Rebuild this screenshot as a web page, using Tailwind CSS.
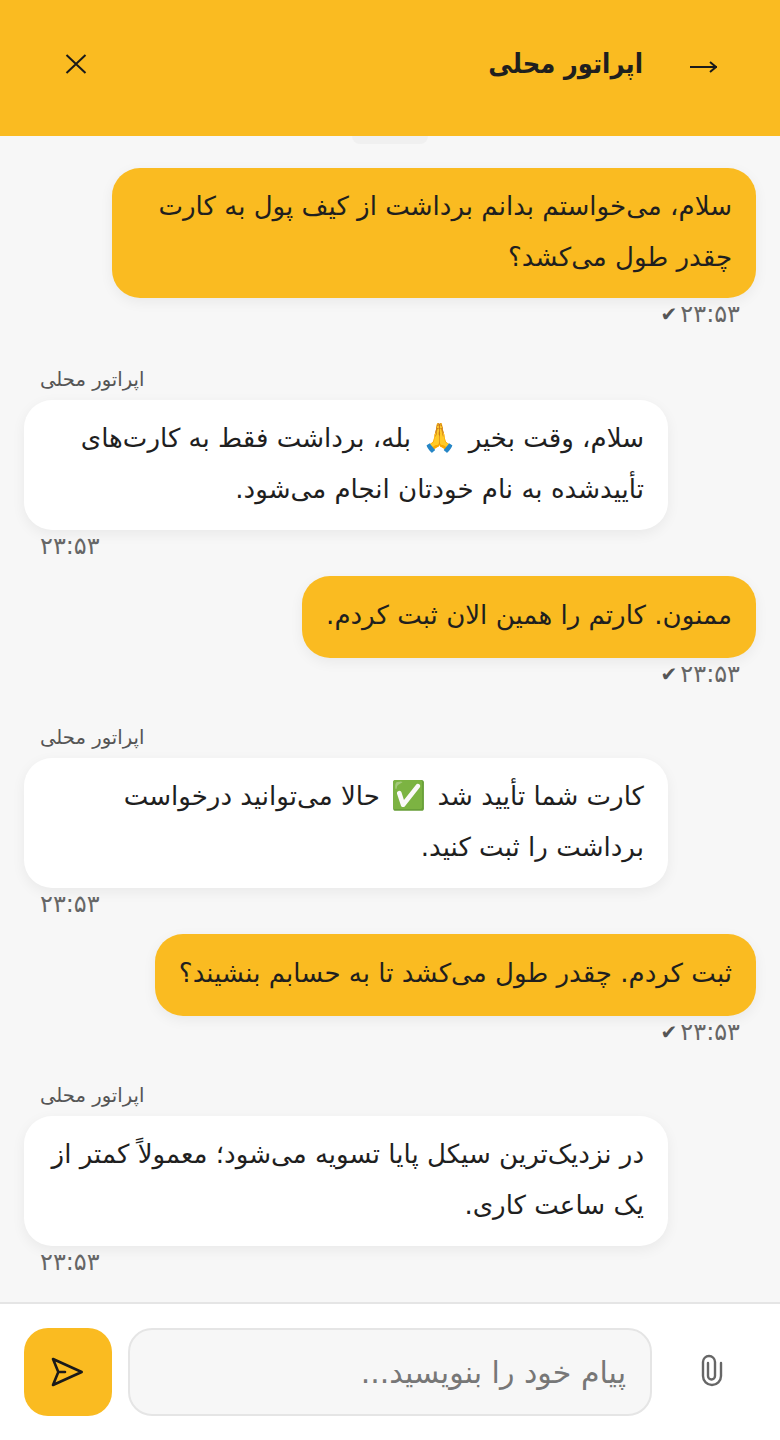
<!DOCTYPE html>
<html lang="fa" dir="rtl">
<head>
  <meta charset="UTF-8">
  <meta name="viewport" content="width=device-width, initial-scale=1.0">
  <title>اپراتور محلی</title>
  <script src="https://cdn.jsdelivr.net/npm/@tailwindcss/browser@4"></script>
</head>
<body class="bg-[#f7f7f7] font-['DejaVu_Sans',sans-serif] text-[#1f1f1f]">
  <div class="relative flex h-[1440px] w-[780px] flex-col overflow-hidden">

    <!-- Header -->
    <header class="relative z-10 flex h-[136px] shrink-0 items-center bg-[#fabb21] pr-[63px] pl-[64px] pb-2">
      <svg class="mt-[5px] h-3 w-[27px]" viewBox="0 0 27 12" fill="none" stroke="#1a1a1a" stroke-width="2"><path d="M27 6H0M20 1l6 5-6 5"/></svg>
      <h1 class="mr-[47px] font-['DejaVu_Sans_Condensed','DejaVu_Sans',sans-serif] text-[27px] font-bold">اپراتور محلی</h1>
      <button class="mr-auto">
        <svg class="h-6 w-6" viewBox="0 0 24 24" fill="none" stroke="#1a1a1a" stroke-width="2"><path d="M2.5 3l19 18M21.5 3l-19 18"/></svg>
      </button>
    </header>
    <!-- Scroll nub under the header -->
    <div class="absolute top-[136px] left-[352px] h-2 w-[76px] rounded-b-xl bg-[#f0f0f0]"></div>

    <!-- Messages -->
    <main class="flex flex-1 flex-col px-6 pt-8 text-[26.05px] leading-[51px]">
      <div class="self-start">
        <p class="w-[644px] rounded-[28px] bg-[#fabb21] px-6 pt-[13px] pb-[15px] shadow-[0_4px_14px_rgba(0,0,0,0.06)]">سلام، می‌خواستم بدانم برداشت از کیف پول به کارت چقدر طول می‌کشد؟</p>
        <div class="mt-1 flex gap-[3px] px-4 text-[24px] leading-6 text-[#666]"><span>۲۳:۵۳</span><span class="text-[20px] text-[#555]">✔</span></div>
      </div>

      <div class="mt-[42px] self-end">
        <p class="mb-2 px-4 text-left text-[19.6px] leading-6 text-[#555]">اپراتور محلی</p>
        <p class="w-[644px] rounded-[28px] bg-white px-6 pt-[13px] pb-[15px] shadow-[0_4px_14px_rgba(0,0,0,0.06)]">سلام، وقت بخیر <span class="mx-[3px] text-[28px] leading-none">🙏</span> بله، برداشت فقط به کارت‌های تأییدشده به نام خودتان انجام می‌شود.</p>
        <p class="mt-1 px-4 text-left text-[24px] leading-6 text-[#666]">۲۳:۵۳</p>
      </div>

      <div class="mt-[18px] self-start">
        <p class="rounded-[28px] bg-[#fabb21] px-6 pt-[14px] pb-[17px] shadow-[0_4px_14px_rgba(0,0,0,0.06)]">ممنون. کارتم را همین الان ثبت کردم.</p>
        <div class="mt-1 flex gap-[3px] px-4 text-[24px] leading-6 text-[#666]"><span>۲۳:۵۳</span><span class="text-[20px] text-[#555]">✔</span></div>
      </div>

      <div class="mt-[40px] self-end">
        <p class="mb-2 px-4 text-left text-[19.6px] leading-6 text-[#555]">اپراتور محلی</p>
        <p class="w-[644px] rounded-[28px] bg-white px-6 pt-[13px] pb-[15px] shadow-[0_4px_14px_rgba(0,0,0,0.06)]">کارت شما تأیید شد <span class="mx-[3px] text-[28px] leading-none">✅</span> حالا می‌توانید درخواست<br>برداشت را ثبت کنید.</p>
        <p class="mt-1 px-4 text-left text-[24px] leading-6 text-[#666]">۲۳:۵۳</p>
      </div>

      <div class="mt-[18px] self-start">
        <p class="rounded-[28px] bg-[#fabb21] px-6 pt-[14px] pb-[17px] shadow-[0_4px_14px_rgba(0,0,0,0.06)]">ثبت کردم. چقدر طول می‌کشد تا به حسابم بنشیند؟</p>
        <div class="mt-1 flex gap-[3px] px-4 text-[24px] leading-6 text-[#666]"><span>۲۳:۵۳</span><span class="text-[20px] text-[#555]">✔</span></div>
      </div>

      <div class="mt-[40px] self-end">
        <p class="mb-2 px-4 text-left text-[19.6px] leading-6 text-[#555]">اپراتور محلی</p>
        <p class="w-[644px] rounded-[28px] bg-white px-6 pt-[13px] pb-[15px] shadow-[0_4px_14px_rgba(0,0,0,0.06)]">در نزدیک‌ترین سیکل پایا تسویه می‌شود؛ معمولاً کمتر از یک ساعت کاری.</p>
        <p class="mt-1 px-4 text-left text-[24px] leading-6 text-[#666]">۲۳:۵۳</p>
      </div>
    </main>

    <!-- Composer -->
    <footer class="flex h-[138px] shrink-0 items-center gap-4 border-t-2 border-[#e5e5e5] bg-white px-6">
      <button class="flex h-[88px] w-[88px] shrink-0 items-center justify-center text-[#666]">
        <svg class="h-[60px] w-[60px]" viewBox="0 0 60 60" fill="none" stroke="currentColor" stroke-width="2.4" stroke-linecap="round"><path d="M39 21v13a9 9 0 0 1-18 0V20a6 6 0 0 1 12 0v14a3.5 3.5 0 0 1-7 0V21"/></svg>
      </button>
      <input class="h-[88px] min-w-0 flex-1 rounded-[24px] border-2 border-[#e5e5e5] bg-[#f7f7f7] px-6 text-[30px] placeholder:text-[#777]" placeholder="پیام خود را بنویسید...">
      <button class="flex h-[88px] w-[88px] shrink-0 items-center justify-center rounded-[24px] bg-[#fabb21]">
        <svg class="h-12 w-12" viewBox="0 0 48 48" fill="none" stroke="#1a1a1a" stroke-width="2.6" stroke-linejoin="round" stroke-linecap="round"><path d="M37.7 24L9 11l5.3 13L9 37zM14.3 24H21"/></svg>
      </button>
    </footer>
  </div>
</body>
</html>
